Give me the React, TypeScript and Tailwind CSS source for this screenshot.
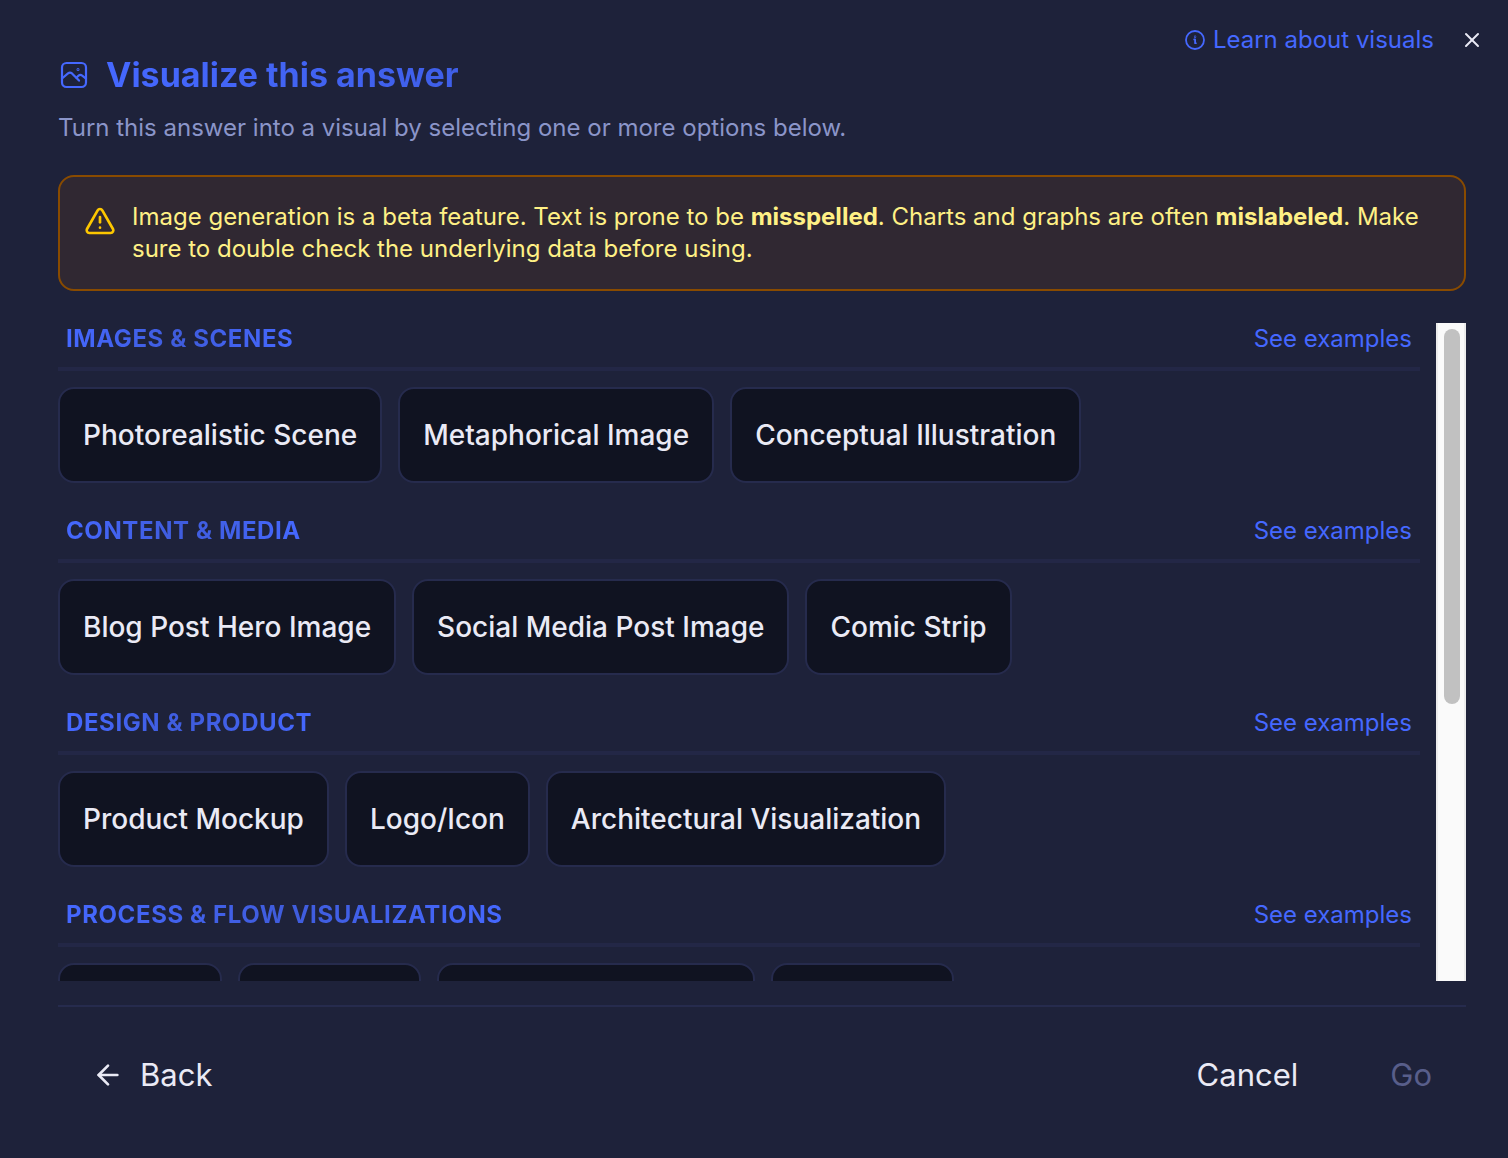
import clsx from "clsx";
import { ArrowLeft, TriangleAlert, X } from "lucide-react";
import { useRef, useState } from "react";

type Category = {
  title: string;
  options: string[];
};

const CATEGORIES: Category[] = [
  {
    title: "Images & Scenes",
    options: ["Photorealistic Scene", "Metaphorical Image", "Conceptual Illustration"],
  },
  {
    title: "Content & Media",
    options: ["Blog Post Hero Image", "Social Media Post Image", "Comic Strip"],
  },
  {
    title: "Design & Product",
    options: ["Product Mockup", "Logo/Icon", "Architectural Visualization"],
  },
  {
    title: "Process & Flow Visualizations",
    options: ["Timeline", "Flowchart", "Process Infographic", "Mind Map"],
  },
  {
    title: "Data & Comparison",
    options: ["Bar Chart", "Comparison Table", "Infographic"],
  },
  {
    title: "Education & Training",
    options: ["Annotated Diagram", "Storyboard", "Concept Map"],
  },
];

function PictureIcon() {
  return (
    <svg
      viewBox="0 0 32 32"
      className="size-8 shrink-0 text-[#4568ff]"
      fill="none"
      stroke="currentColor"
      strokeWidth="2.2"
      strokeLinecap="round"
      strokeLinejoin="round"
      aria-hidden
    >
      <rect x="4" y="4" width="24" height="24" rx="4.5" />
      <path d="M4 19.5 10 14.4q2-1.6 4 0l7 7.2" />
      <path d="m18.4 18.8 2-2q1.8-1.6 3.8-.2l3.8 3" />
      <circle cx="20" cy="10.6" r=".4" />
    </svg>
  );
}

function InfoIcon() {
  return (
    <svg
      viewBox="0 0 20 20"
      className="size-5 shrink-0"
      fill="none"
      stroke="currentColor"
      strokeWidth="1.8"
      strokeLinecap="round"
      strokeLinejoin="round"
      aria-hidden
    >
      <circle cx="10" cy="10" r="9" />
      <path d="M9.2 9.4h.9v3.8h.8" />
      <circle cx="10.1" cy="6.7" r=".3" />
    </svg>
  );
}

type CategorySectionProps = {
  category: Category;
  selected: string[];
  onToggle: (option: string) => void;
};

function CategorySection({ category, selected, onToggle }: CategorySectionProps) {
  return (
    <section className="flex flex-col gap-4">
      <div className="flex items-center justify-between border-b-4 border-[#232746] px-2 pb-3">
        <h2 className="bg-linear-to-r from-[#4568ff] via-[#3f5cdc] to-[#4568ff] bg-clip-text text-2xl font-bold tracking-wide text-transparent uppercase">
          {category.title}
        </h2>
        <a href="#examples" className="text-2xl text-[#4568ff] hover:underline">
          See examples
        </a>
      </div>
      <div className="flex flex-wrap gap-4">
        {category.options.map((option) => (
          <button
            key={option}
            type="button"
            aria-pressed={selected.includes(option)}
            onClick={() => onToggle(option)}
            className={clsx(
              "h-24 rounded-2xl border-2 bg-[#101321] px-[23px] text-[28px] font-medium text-[#eaeaf5]",
              selected.includes(option) ? "border-[#4568ff]" : "border-[#262b4d]",
            )}
          >
            {option}
          </button>
        ))}
      </div>
    </section>
  );
}

export default function App() {
  const [selected, setSelected] = useState<string[]>([]);
  const [offset, setOffset] = useState(0);
  const listRef = useRef<HTMLDivElement>(null);

  function toggle(option: string) {
    setSelected((s) => (s.includes(option) ? s.filter((o) => o !== option) : [...s, option]));
  }

  function handleScroll() {
    const el = listRef.current;
    if (!el) return;
    setOffset((el.scrollTop / el.scrollHeight) * 100);
  }

  return (
    <main className="flex h-screen flex-col bg-[#1e223a] pt-6 pr-[42px] pb-[47px] pl-[58px] font-['Inter',sans-serif]">
      <div className="-mr-[18px] flex h-8 items-center justify-end gap-[26px]">
        <a href="#learn" className="flex items-center gap-2 text-2xl text-[#4568ff] hover:underline">
          <InfoIcon />
          Learn about visuals
        </a>
        <button type="button" aria-label="Close" className="text-[#eaeaf5]">
          <X className="size-6" strokeWidth={2} />
        </button>
      </div>

      <header>
        <h1 className="flex items-center gap-4 text-[34px] leading-[38px] font-bold">
          <PictureIcon />
          <span className="bg-linear-to-r from-[#4568ff] to-[#3f5fe8] bg-clip-text text-transparent">
            Visualize this answer
          </span>
        </h1>
        <p className="mt-[18px] text-2xl text-[#8b95c9]">
          Turn this answer into a visual by selecting one or more options below.
        </p>
      </header>

      <div
        role="note"
        className="mt-[31px] flex gap-4 rounded-2xl border-2 border-[#894b00] bg-[#302832] p-6 text-[#fff085]"
      >
        <TriangleAlert className="mt-1 size-8 shrink-0 text-[#fdc700]" strokeWidth={2} />
        <p className="text-2xl">
          Image generation is a beta feature. Text is prone to be <strong>misspelled</strong>. Charts and
          graphs are often <strong>mislabeled</strong>. Make sure to double check the underlying data before
          using.
        </p>
      </div>

      <div className="mt-8 flex min-h-0 flex-1 gap-4">
        <div
          ref={listRef}
          onScroll={handleScroll}
          className="flex flex-1 flex-col gap-8 overflow-y-auto [scrollbar-width:none]"
        >
          {CATEGORIES.map((category) => (
            <CategorySection
              key={category.title}
              category={category}
              selected={selected}
              onToggle={toggle}
            />
          ))}
        </div>
        <div aria-hidden className="w-[30px] border-x-2 border-[#ececec] bg-[#fafafa] py-1.5 pl-1.5">
          <div className="h-full">
            <div style={{ height: `${offset}%` }} />
            <div className="h-[58%] w-4 rounded-full bg-[#c1c1c1]" />
          </div>
        </div>
      </div>

      <footer className="mt-6 flex items-center justify-between border-t-2 border-[#262b4d] pt-8 text-[31px] text-[#eaeaf5]">
        <button type="button" className="flex h-[72px] items-center gap-4 px-[34px]">
          <ArrowLeft className="size-8" strokeWidth={2} />
          Back
        </button>
        <div className="flex gap-6">
          <button type="button" className="h-[72px] px-[34px]">
            Cancel
          </button>
          <button
            type="button"
            disabled={selected.length === 0}
            className="h-[72px] px-[34px] disabled:text-[#585e8a]"
          >
            Go
          </button>
        </div>
      </footer>
    </main>
  );
}
